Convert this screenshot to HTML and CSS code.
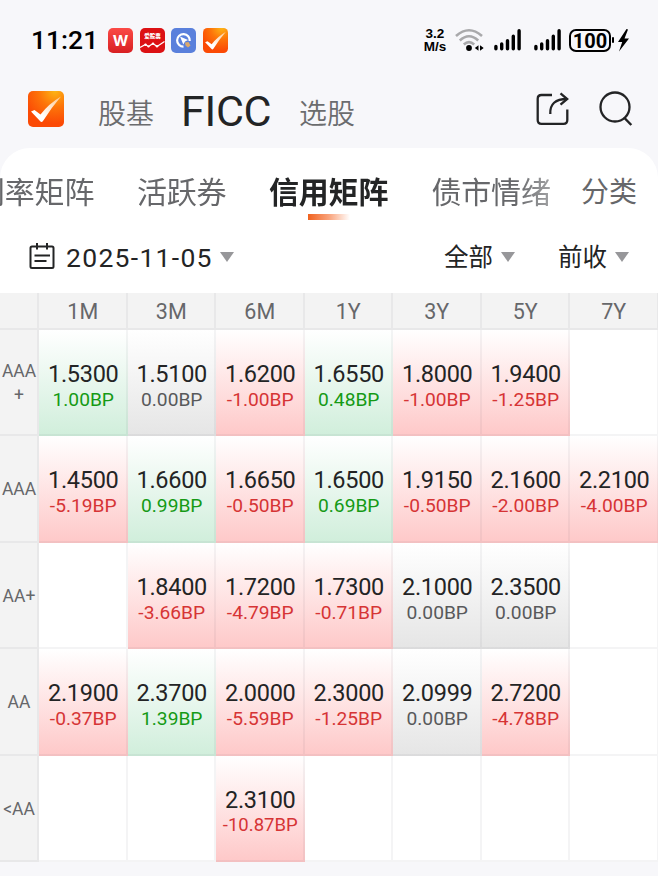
FILE: index.html
```
<!DOCTYPE html>
<html lang="zh-CN">
<head>
  <meta charset="UTF-8">
  <meta name="viewport" content="width=device-width, initial-scale=1.0">
  <title>信用矩阵</title>
  <link rel="stylesheet" href="styles.css">
</head>
<body>

  <!-- Shared gradients -->
  <svg class="defs" width="0" height="0">
    <defs>
      <radialGradient id="orange" cx="0.75" cy="0" r="0.9">
        <stop offset="0" stop-color="#fdb515"/>
        <stop offset="0.5" stop-color="#fd7409"/>
        <stop offset="1" stop-color="#fb4a05"/>
      </radialGradient>
      <linearGradient id="tick" x1="0" y1="1" x2="1" y2="0">
        <stop offset="0.3" stop-color="#fff"/>
        <stop offset="1" stop-color="#ffc890"/>
      </linearGradient>
      <linearGradient id="red" x1="0" y1="0" x2="0" y2="1">
        <stop offset="0" stop-color="#fb4a46"/>
        <stop offset="1" stop-color="#d81f22"/>
      </linearGradient>
    </defs>
  </svg>

  <!-- Status bar -->
  <div class="status-bar">
    <span class="time">11:21</span>
    <div class="app-icons">
      <svg width="25" height="25" viewBox="0 0 25 25">
        <rect width="25" height="25" rx="5" fill="url(#red)"/>
        <text class="icon-w" x="12.5" y="17.7" text-anchor="middle">W</text>
      </svg>
      <svg width="25" height="25" viewBox="0 0 25 25">
        <rect width="25" height="25" rx="5" fill="#dc1114"/>
        <text class="icon-stock" x="12.5" y="10" text-anchor="middle">爱股票</text>
        <path d="M0 19.5L5.5 16.5L8.5 18.5L13 15.5L17 18.5L24.5 13.5" fill="none" stroke="#fff" stroke-width="1.2"/>
        <g fill="#fff">
          <circle cx="5.5" cy="16.7" r="1.2"/><circle cx="8.5" cy="18.5" r="1.1"/>
          <circle cx="13" cy="15.7" r="1.2"/><circle cx="17" cy="18.3" r="1.2"/>
        </g>
      </svg>
      <svg width="25" height="25" viewBox="0 0 25 25">
        <rect width="25" height="25" rx="5" fill="#5a80dc"/>
        <path d="M12.5 18.7A6.3 6.3 0 1 1 18.7 13" fill="none" stroke="#fff" stroke-width="2.2"/>
        <path d="M9 8.5L17 12L14 13.5L12.3 16.5Z" fill="#fff"/>
        <path d="M14 14.5L17.5 14L19.5 17.5L17 19.5L14.5 17.5Z" fill="#dba96c"/>
      </svg>
      <svg width="25" height="25" viewBox="0 0 36 36">
        <rect width="36" height="36" rx="6.5" fill="url(#orange)"/>
        <path d="M3 20.5L6.5 19L12.5 23.5Q21 12.500 33 5.500Q23 17 15 30Q13.500 32 12 30Z" fill="url(#tick)"/>
      </svg>
    </div>
    <div class="status-right">
      <div class="speed"><span>3.2</span><span>M/s</span></div>
      <svg class="wifi" width="29" height="24" viewBox="0 0 29 24">
        <g fill="none" stroke="#a9a9ab" stroke-width="2.6">
          <path d="M1 8Q14 -3.5 27 8"/>
          <path d="M4.8 12.5Q14 4 23.2 12.5"/>
          <path d="M8.8 16.5Q14 11.8 19.2 16.5"/>
        </g>
        <circle cx="14" cy="20" r="2.9"/>
        <path d="M23.500 17.300V22.700L19.800 20ZM25 17.300V22.700L28.700 20Z"/>
      </svg>
      <svg class="signal" width="27" height="22" viewBox="0 0 27 22">
        <g stroke="#000" stroke-width="3.4" stroke-linecap="round">
          <path d="M1.900 17.500V19.700M7.700 15V19.700M13.500 11.800V19.700M19.300 7.300V19.700M25.100 1.800V19.700"/>
        </g>
      </svg>
      <svg class="signal" width="27" height="22" viewBox="0 0 27 22">
        <g stroke="#000" stroke-width="3.4" stroke-linecap="round">
          <path d="M1.900 17.500V19.700M7.700 15V19.700M13.500 11.800V19.700M19.300 7.300V19.700M25.100 1.800V19.700"/>
        </g>
      </svg>
      <span class="battery">100</span>
      <span class="battery-cap"></span>
      <svg class="bolt" width="11" height="23" viewBox="0 0 11 23">
        <path d="M8.500 0L0 13H4.200L1 22.500L11 9.500H6.500L10 0.500Z"/>
      </svg>
    </div>
  </div>

  <!-- Top navigation -->
  <div class="top-nav">
    <svg class="logo" width="36" height="36" viewBox="0 0 36 36">
      <rect width="36" height="36" rx="5" fill="url(#orange)"/>
      <path d="M3 20.500L6.500 19L12.500 23.500Q21 12.500 33 5.500Q23 17 15 30Q13.500 32 12 30Z" fill="url(#tick)"/>
    </svg>
    <span class="nav-item nav-first">股基</span>
    <span class="nav-item nav-active">FICC</span>
    <span class="nav-item">选股</span>
    <div class="nav-actions">
      <svg width="34" height="34" viewBox="0 0 34 34">
        <g fill="none" stroke="#232425" stroke-width="2.3">
          <path d="M16 3H5.500Q1.700 3 1.700 6.800V28Q1.700 31.800 5.500 31.800H27.500Q31.300 31.800 31.300 28V17.500"/>
          <path d="M14.300 22Q13.500 7 31 7"/>
          <path d="M24.500 1.300L31.200 7L24.500 12.700"/>
        </g>
      </svg>
      <svg width="34" height="36" viewBox="0 0 34 36">
        <circle cx="16" cy="16" r="14.5" fill="none" stroke="#232425" stroke-width="2.3"/>
        <path d="M25 26.500L32.300 34" stroke="#232425" stroke-width="2.5"/>
      </svg>
    </div>
  </div>

  <div class="panel">
    <!-- Tabs -->
    <div class="tabs">
      <div class="tab-scroll">
        <div class="tab">利率矩阵</div>
        <div class="tab">活跃券</div>
        <div class="tab active">信用矩阵</div>
        <div class="tab">债市情绪</div>
      </div>
      <div class="tab-more">分类</div>
    </div>

    <!-- Filters -->
    <div class="filters">
      <svg class="calendar" width="26" height="27" viewBox="0 0 26 27">
        <g fill="none" stroke="#232425" stroke-width="2">
          <rect x="1.5" y="3.5" width="23" height="21.5" rx="1.5"/>
          <path d="M8 0V6.500M18 0V6.500M5.500 12.500H21M5.500 18H17.500"/>
        </g>
      </svg>
      <span class="date">2025-11-05</span>
      <span class="arrow"></span>
      <span class="select">全部</span>
      <span class="arrow"></span>
      <span class="select select-last">前收</span>
      <span class="arrow"></span>
    </div>

    <!-- Credit matrix -->
    <div class="matrix">
      <div class="head"></div>
      <div class="head">1M</div>
      <div class="head">3M</div>
      <div class="head">6M</div>
      <div class="head">1Y</div>
      <div class="head">3Y</div>
      <div class="head">5Y</div>
      <div class="head">7Y</div>

      <div class="rating">AAA<br>+</div>
      <div class="cell up"><b>1.5300</b><i>1.00BP</i></div>
      <div class="cell flat"><b>1.5100</b><i>0.00BP</i></div>
      <div class="cell down"><b>1.6200</b><i>-1.00BP</i></div>
      <div class="cell up"><b>1.6550</b><i>0.48BP</i></div>
      <div class="cell down"><b>1.8000</b><i>-1.00BP</i></div>
      <div class="cell down"><b>1.9400</b><i>-1.25BP</i></div>
      <div class="cell"></div>

      <div class="rating">AAA</div>
      <div class="cell down"><b>1.4500</b><i>-5.19BP</i></div>
      <div class="cell up"><b>1.6600</b><i>0.99BP</i></div>
      <div class="cell down"><b>1.6650</b><i>-0.50BP</i></div>
      <div class="cell up"><b>1.6500</b><i>0.69BP</i></div>
      <div class="cell down"><b>1.9150</b><i>-0.50BP</i></div>
      <div class="cell down"><b>2.1600</b><i>-2.00BP</i></div>
      <div class="cell down"><b>2.2100</b><i>-4.00BP</i></div>

      <div class="rating">AA+</div>
      <div class="cell"></div>
      <div class="cell down"><b>1.8400</b><i>-3.66BP</i></div>
      <div class="cell down"><b>1.7200</b><i>-4.79BP</i></div>
      <div class="cell down"><b>1.7300</b><i>-0.71BP</i></div>
      <div class="cell flat"><b>2.1000</b><i>0.00BP</i></div>
      <div class="cell flat"><b>2.3500</b><i>0.00BP</i></div>
      <div class="cell"></div>

      <div class="rating">AA</div>
      <div class="cell down"><b>2.1900</b><i>-0.37BP</i></div>
      <div class="cell up"><b>2.3700</b><i>1.39BP</i></div>
      <div class="cell down"><b>2.0000</b><i>-5.59BP</i></div>
      <div class="cell down"><b>2.3000</b><i>-1.25BP</i></div>
      <div class="cell flat"><b>2.0999</b><i>0.00BP</i></div>
      <div class="cell down"><b>2.7200</b><i>-4.78BP</i></div>
      <div class="cell"></div>

      <div class="rating">&lt;AA</div>
      <div class="cell"></div>
      <div class="cell"></div>
      <div class="cell down"><b>2.3100</b><i class="long">-10.87BP</i></div>
      <div class="cell"></div>
      <div class="cell"></div>
      <div class="cell"></div>
      <div class="cell"></div>
    </div>
  </div>
  <div class="bottom"></div>

</body>
</html>
```
FILE: styles.css
```
* {
  box-sizing: border-box;
}
body {
  margin: 0;
  height: 881px;
  overflow: hidden;
  background-color: #f7f7fa;
  color: #232425;
  font-family: Roboto, "Noto Sans CJK SC", sans-serif;
}
svg {
  display: block;
  flex: none;
}
.defs {
  position: absolute;
}

/* Status bar */
.status-bar {
  display: flex;
  align-items: center;
  height: 80px;
  padding: 0 29px 0 31px;
  color: #000;
}
.time {
  width: 77px;
  font-size: 26.5px;
  font-weight: 500;
  line-height: 30px;
}
.app-icons {
  display: flex;
  gap: 6.5px;
}
.icon-w {
  fill: #fff;
  font-family: Inter, sans-serif;
  font-size: 15px;
  font-weight: 700;
}
.icon-stock {
  fill: #fff;
  font-size: 5.5px;
  font-weight: 900;
}
.status-right {
  display: flex;
  align-items: center;
  margin-left: auto;
}
.speed {
  display: flex;
  flex-direction: column;
  align-items: center;
  width: 26px;
  margin-right: 7px;
  font-family: "Liberation Sans", sans-serif;
  font-size: 13.5px;
  font-weight: 700;
  line-height: 14px;
}
.speed span:first-child {
  line-height: 13px;
}
.wifi {
  margin-right: 10px;
}
.signal {
  margin-right: 12.5px;
}
.signal + .battery {
  margin-left: -4px;
}
.battery {
  width: 42px;
  height: 23px;
  border: 2px solid #000;
  border-radius: 7px;
  font-size: 20px;
  font-weight: 700;
  line-height: 20px;
  text-align: center;
}
.battery-cap {
  width: 2px;
  height: 6px;
  margin: 0 4px 0 1px;
  border-radius: 1px;
  background-color: #000;
}

/* Top navigation */
.top-nav {
  display: flex;
  align-items: center;
  height: 68px;
  padding: 0 25px 10px 27.5px;
}
.nav-item {
  color: #6b6c6e;
  font-size: 28px;
  font-weight: 350;
  line-height: 40px;
  padding-top: 12px;
}
.nav-first {
  margin-left: 34.5px;
}
.nav-active {
  width: 91px;
  margin: 0 27px 0 27px;
  padding: 3px 0 0;
  color: #232425;
  font-size: 43px;
  font-weight: 400;
  letter-spacing: -0.3px;
}
.nav-actions {
  display: flex;
  align-items: center;
  gap: 29px;
  margin-left: auto;
}

.panel {
  height: 714px;
  overflow: hidden;
  border-radius: 30px 30px 0 0;
  background-color: #fff;
}

/* Tabs */
.tabs {
  display: flex;
  height: 80px;
  padding-top: 23px;
  color: #66676a;
  font-size: 30px;
  line-height: 44px;
  white-space: nowrap;
}
.tab-scroll {
  display: flex;
  gap: 43px;
  width: 552px;
  overflow: hidden;
  -webkit-mask-image: linear-gradient(to right, #000 515px, rgba(0, 0, 0, 0.6) 552px);
  mask-image: linear-gradient(to right, #000 515px, rgba(0, 0, 0, 0.6) 552px);
}
.tab {
  width: 119px;
  flex: none;
  letter-spacing: -0.2px;
}
.tab:first-child {
  margin-left: -25px;
}
.tab:nth-child(2) {
  width: 89px;
}
.tab:nth-child(3) {
  width: 119.5px;
}
.active {
  color: #232425;
  font-weight: 700;
}
.active::after {
  content: "";
  display: block;
  width: 42px;
  height: 6px;
  margin: -1px auto 0;
  background: linear-gradient(to right, #f0621f, #f9a37c 50%, #fff);
}
.tab-more {
  margin-left: 29px;
  font-size: 28px;
}

/* Filters */
.filters {
  display: flex;
  align-items: center;
  height: 65px;
  padding: 0 29px 8px 29px;
  font-size: 24.5px;
  line-height: 36px;
}
.calendar {
  margin-right: 11px;
}
.date {
  width: 154px;
  padding-top: 2px;
  font-size: 26.5px;
  letter-spacing: 1.3px;
  white-space: nowrap;
}
.arrow {
  border: 7.5px solid transparent;
  border-top: 10px solid #97979a;
  border-bottom: 0;
}
.select {
  margin: 0 8px 0 auto;
  padding-top: 2px;
}
.select-last {
  margin-left: 43px;
}

/* Credit matrix */
.matrix {
  display: grid;
  grid-template-columns: 39px repeat(7, 88.5px);
  grid-template-rows: 36.5px repeat(5, 106.5px);
  width: 658.5px;
}
.matrix > div {
  display: flex;
  flex-direction: column;
  align-items: center;
  justify-content: center;
  border: solid rgba(70, 70, 80, 0.06);
  border-width: 0 2px 2px 0;
  background-origin: border-box;
}
.head,
.rating {
  background-color: #f3f3f3;
  color: #66676a;
}
.matrix > .head {
  padding: 3px 0 0 1px;
  font-size: 21.5px;
  line-height: 30px;
}
.rating {
  padding: 2px 0 0 1px;
  font-size: 17.5px;
  line-height: 24px;
  text-align: center;
}
.cell {
  padding: 9px 0 0 2px;
}
.cell b {
  font-size: 23.5px;
  font-weight: 400;
  letter-spacing: -0.3px;
  line-height: 26px;
}
.cell i {
  color: #58595b;
  font-size: 19.2px;
  font-style: normal;
  line-height: 25px;
}
.up {
  background-image: linear-gradient(#fff, #d0eedb);
}
.down {
  background-image: linear-gradient(#fff, #fec8c8);
}
.flat {
  background-image: linear-gradient(#fff, #e5e5e5);
}
.up i {
  color: #159a15;
}
.down i {
  color: #d63435;
}
.cell .long {
  font-size: 18.5px;
}
.bottom {
  height: 19px;
  border-bottom: 5px solid #fff;
}
```
